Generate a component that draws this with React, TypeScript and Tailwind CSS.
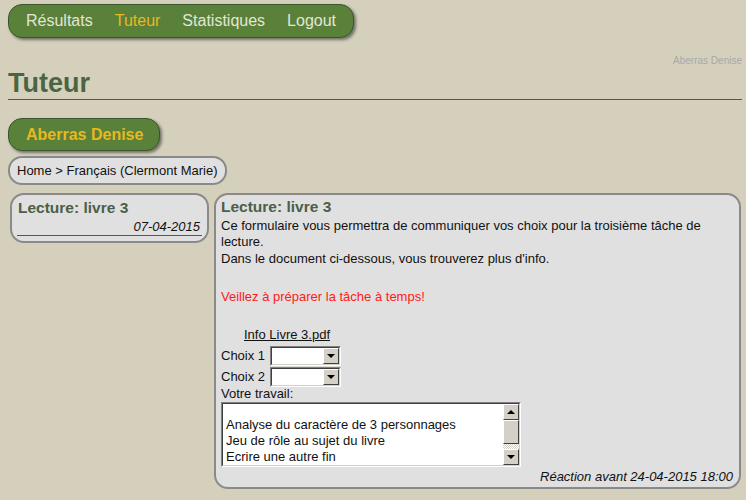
import React from "react";

function Select() {
  return (
    <div className="w-[71px] h-[20px] border border-t-[#808080] border-l-[#808080] border-r-white border-b-white">
      <div className="h-full flex bg-white border border-t-[#404040] border-l-[#404040] border-r-[#d4d0c8] border-b-[#d4d0c8]">
        <div className="flex-1" />
        <div className="w-[16px] h-full bg-[#d4d0c8] border border-t-white border-l-white border-r-[#404040] border-b-[#404040] flex items-center justify-center">
          <div className="w-0 h-0 border-l-[4px] border-r-[4px] border-t-[4px] border-l-transparent border-r-transparent border-t-black" />
        </div>
      </div>
    </div>
  );
}

function ScrollBtn({ up }: { up?: boolean }) {
  return (
    <div className="w-[16px] h-[16px] bg-[#d4d0c8] border border-t-white border-l-white border-r-[#404040] border-b-[#404040] flex items-center justify-center">
      {up ? (
        <div className="w-0 h-0 border-l-[4px] border-r-[4px] border-b-[4px] border-l-transparent border-r-transparent border-b-black" />
      ) : (
        <div className="w-0 h-0 border-l-[4px] border-r-[4px] border-t-[4px] border-l-transparent border-r-transparent border-t-black" />
      )}
    </div>
  );
}

export default function App() {
  return (
    <div
      className="w-[746px] h-[500px] bg-[#d4d0bc] pl-[8px] pr-[4px] pt-[4px] overflow-hidden text-[13px] text-[#111]"
      style={{ fontFamily: '"Liberation Sans", Arial, sans-serif' }}
    >
      <nav className="inline-flex items-center h-[34px] px-[17px] gap-[22px] rounded-[14px] border border-[#3a5530] bg-[#5a8139] shadow-[2px_2px_3px_rgba(0,0,0,0.45)] text-[16px] text-[#e2e6d6]">
        <span>Résultats</span>
        <span className="text-[#e8b820]">Tuteur</span>
        <span>Statistiques</span>
        <span>Logout</span>
      </nav>

      <div className="mt-[17px] text-right text-[10px] leading-[12px] text-[#a8a8a8]">Aberras Denise</div>
      <h1 className="text-[27px] leading-[32px] font-bold text-[#4a6543] border-b border-[#4a6040]">Tuteur</h1>

      <div className="mt-[18px] inline-flex items-center h-[33px] pl-[17px] pr-[16px] rounded-[14px] border border-[#3a5530] bg-[#5a8139] shadow-[2px_2px_3px_rgba(0,0,0,0.45)] text-[16px] font-bold text-[#e8b820]">
        Aberras Denise
      </div>

      <div>
        <div className="mt-[5px] inline-flex items-center h-[29px] pl-[7px] pr-[8px] rounded-[14px] border-2 border-[#8a8a8a] bg-[#e0e0e0] text-[13px]">
          Home &gt; Français (Clermont Marie)
        </div>
      </div>

      <div className="mt-[8px] flex items-start gap-[5px] pl-[2px]">
        <div className="w-[199px] rounded-[14px] border-2 border-[#8a8a8a] bg-[#e0e0e0] px-[5px] pt-[4px] pb-[5px]">
          <div className="text-[15.5px] leading-[18px] font-bold text-[#4a6048] pl-[1px]">Lecture: livre 3</div>
          <div className="text-right italic leading-[15px] pt-[2px] pr-[2px] pb-[1px] border-b border-[#4a6040]">07-04-2015</div>
        </div>

        <div className="w-[527px] h-[296px] rounded-[14px] border-2 border-[#8a8a8a] bg-[#e0e0e0] pl-[5px] pr-[6px] pt-[3px]">
          <div className="text-[15.5px] leading-[18px] font-bold text-[#4a6048]">Lecture: livre 3</div>
          <p className="mt-[2px] leading-[16px]">
            Ce formulaire vous permettra de communiquer vos choix pour la troisième tâche de lecture.
          </p>
          <p className="mt-[1px] leading-[16px]">Dans le document ci-dessous, vous trouverez plus d'info.</p>
          <p className="mt-[22px] leading-[16px] text-[#ff1a1a]">Veillez à préparer la tâche à temps!</p>
          <div className="mt-[22px] leading-[16px] pl-[23px]">
            <span className="underline">Info Livre 3.pdf</span>
          </div>
          <div className="mt-[3px] flex items-center gap-[5px]">
            <span>Choix 1</span>
            <Select />
          </div>
          <div className="mt-[1px] flex items-center gap-[5px]">
            <span>Choix 2</span>
            <Select />
          </div>
          <div className="leading-[14px]">Votre travail:</div>
          <div className="mt-[1px] w-[300px] h-[65px] border border-t-[#808080] border-l-[#808080] border-r-white border-b-white">
            <div className="h-full flex bg-white border border-t-[#404040] border-l-[#404040] border-r-[#d4d0c8] border-b-[#d4d0c8]">
              <div className="flex-1 pl-[3px] pt-[13px] leading-[16px] overflow-hidden">
                <div>Analyse du caractère de 3 personnages</div>
                <div>Jeu de rôle au sujet du livre</div>
                <div>Ecrire une autre fin</div>
              </div>
              <div className="w-[16px] flex flex-col">
                <ScrollBtn up />
                <div className="h-[24px] bg-[#d4d0c8] border border-t-white border-l-white border-r-[#404040] border-b-[#404040]" />
                <div className="flex-1 bg-[repeating-conic-gradient(#d4d0c8_0_25%,#ffffff_0_50%)] bg-size-[2px_2px]" />
                <ScrollBtn />
              </div>
            </div>
          </div>
          <div className="mt-[2px] text-right italic leading-[15px]">Réaction avant 24-04-2015 18:00</div>
        </div>
      </div>
    </div>
  );
}
